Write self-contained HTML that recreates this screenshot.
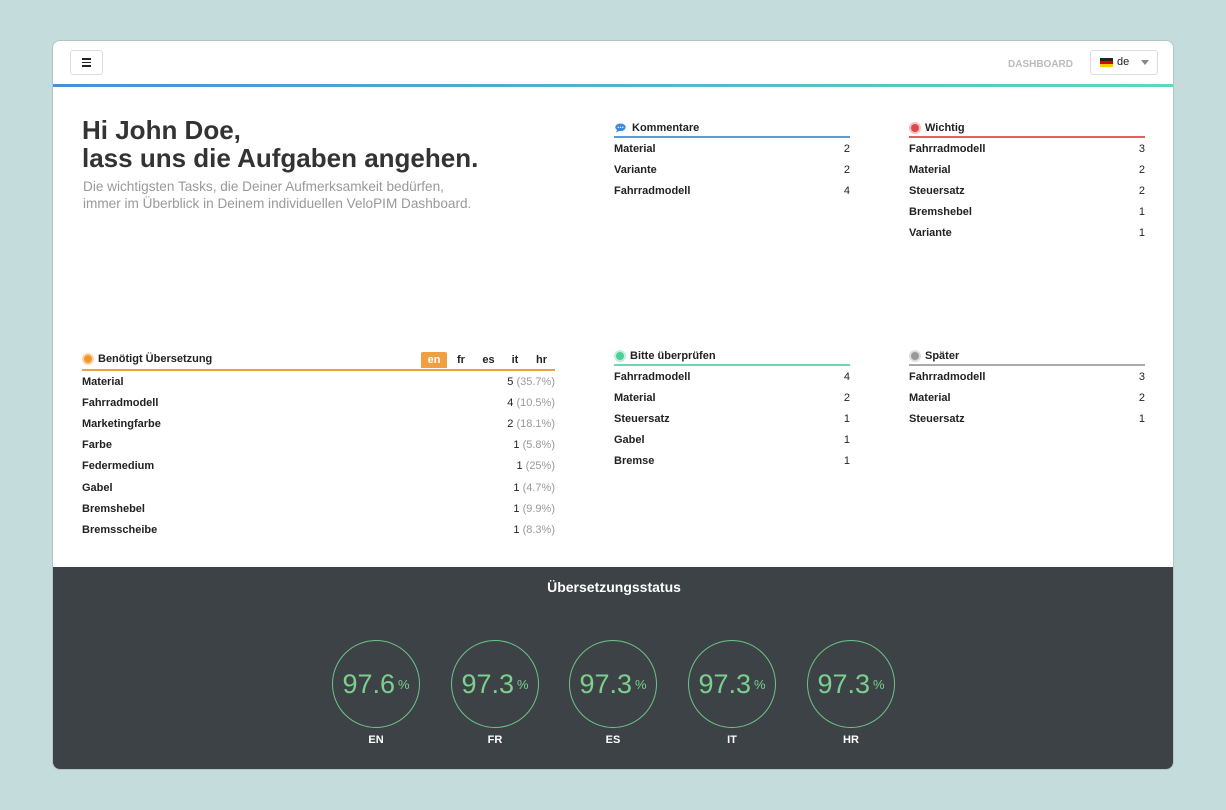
<!DOCTYPE html><html><head><style>
*{margin:0;padding:0;box-sizing:border-box}
body{width:1226px;height:810px;background:#c4dcdc;font-family:"Liberation Sans",sans-serif;position:relative;overflow:hidden}
.card{position:absolute;left:52px;top:40px;width:1122px;height:730px;background:#fff;border-radius:8px;overflow:hidden;border:1px solid #b8c4c4}
.a{position:absolute}
.list{position:absolute;width:236px;font-size:11px;color:#222}
.hd{font-weight:bold;height:19px;display:flex;align-items:center;gap:6px;padding-left:1px}
.row{display:flex;justify-content:space-between;height:21.2px;align-items:center;font-weight:bold}
.row span:last-child{font-weight:normal}
.g{color:#999}
.dot{width:8px;height:8px;border-radius:50%;display:inline-block;margin-left:1px}
.circ{position:absolute;width:88px;height:88px;border:1.3px solid #6dc487;border-radius:50%;color:#7ccf8e;font-size:27px;display:flex;align-items:center;justify-content:center}
.circ small{font-size:13px;margin-left:3px}
.lab{position:absolute;color:#fff;font-weight:bold;font-size:11px;width:88px;text-align:center}
</style></head><body>
<div class="card">
<div class="a" style="left:17px;top:9px;width:33px;height:25px;border:1px solid #ddd;border-radius:3px;display:flex;align-items:center;justify-content:center;flex-direction:column;gap:2px"><i style="width:9px;height:1.7px;background:#222;display:block"></i><i style="width:9px;height:1.7px;background:#222;display:block"></i><i style="width:9px;height:1.7px;background:#222;display:block"></i></div>
<div class="a" style="left:955px;top:18px;font-size:10px;font-weight:bold;color:#bbb">DASHBOARD</div>
<div class="a" style="left:1037px;top:9px;width:68px;height:25px;border:1px solid #ddd;border-radius:3px;font-size:11px;color:#222"><span class="a" style="left:9px;top:7px;width:13px;height:9px;background:linear-gradient(#222 33%,#d00 33%,#d00 66%,#fc0 66%)"></span><span class="a" style="left:26px;top:5px">de</span><span class="a" style="left:50px;top:9px;border:4px solid transparent;border-top:5px solid #888"></span></div>
<div class="a" style="left:0;top:43px;width:1122px;height:3px;background:linear-gradient(90deg,#4a8fd8,#5ad8c0)"></div>
<div class="a" style="left:29px;top:75px;font-size:26px;font-weight:bold;color:#333;line-height:28px">Hi John Doe,<br>lass uns die Aufgaben angehen.</div>
<div class="a" style="left:30px;top:137px;font-size:13.6px;color:#999;line-height:17px">Die wichtigsten Tasks, die Deiner Aufmerksamkeit bedürfen,<br>immer im Überblick in Deinem individuellen VeloPIM Dashboard.</div>

<div class="list" style="left:561px;top:78px"><div class="hd" style="border-bottom:2px solid #5b9bd5"><svg width="11" height="10" viewBox="0 0 11 10"><ellipse cx="5.5" cy="4.3" rx="5.2" ry="3.8" fill="#3f8ad8"/><path d="M2 7 L1 9.5 L4.5 7.8Z" fill="#3f8ad8"/><circle cx="3.2" cy="4.3" r=".7" fill="#fff"/><circle cx="5.5" cy="4.3" r=".7" fill="#fff"/><circle cx="7.8" cy="4.3" r=".7" fill="#fff"/></svg>Kommentare</div>
<div class="row"><span>Material</span><span>2</span></div><div class="row"><span>Variante</span><span>2</span></div><div class="row"><span>Fahrradmodell</span><span>4</span></div></div>

<div class="list" style="left:856px;top:78px"><div class="hd" style="border-bottom:2px solid #e06060"><span class="dot" style="background:#e04848;box-shadow:0 0 0 2px #f8c0c0"></span>Wichtig</div>
<div class="row"><span>Fahrradmodell</span><span>3</span></div><div class="row"><span>Material</span><span>2</span></div><div class="row"><span>Steuersatz</span><span>2</span></div><div class="row"><span>Bremshebel</span><span>1</span></div><div class="row"><span>Variante</span><span>1</span></div></div>

<div class="list" style="left:29px;top:307px;width:473px"><div class="hd" style="height:23px;border-bottom:2px solid #f0a040;position:relative"><span class="dot" style="background:#f0962e;box-shadow:0 0 0 2px #fbd5a8"></span>Benötigt Übersetzung
<div class="a" style="right:0;top:4px;display:flex;font-size:11px"><span style="background:#f0a040;color:#fff;width:26px;text-align:center;padding:2px 0;border-radius:2px 2px 0 0">en</span><span style="width:28px;text-align:center;padding:2px 0">fr</span><span style="width:27px;text-align:center;padding:2px 0">es</span><span style="width:26px;text-align:center;padding:2px 0">it</span><span style="width:27px;text-align:center;padding:2px 0">hr</span></div></div>
<div class="row"><span>Material</span><span>5 <i class="g" style="font-style:normal">(35.7%)</i></span></div>
<div class="row"><span>Fahrradmodell</span><span>4 <i class="g" style="font-style:normal">(10.5%)</i></span></div>
<div class="row"><span>Marketingfarbe</span><span>2 <i class="g" style="font-style:normal">(18.1%)</i></span></div>
<div class="row"><span>Farbe</span><span>1 <i class="g" style="font-style:normal">(5.8%)</i></span></div>
<div class="row"><span>Federmedium</span><span>1 <i class="g" style="font-style:normal">(25%)</i></span></div>
<div class="row"><span>Gabel</span><span>1 <i class="g" style="font-style:normal">(4.7%)</i></span></div>
<div class="row"><span>Bremshebel</span><span>1 <i class="g" style="font-style:normal">(9.9%)</i></span></div>
<div class="row"><span>Bremsscheibe</span><span>1 <i class="g" style="font-style:normal">(8.3%)</i></span></div></div>

<div class="list" style="left:561px;top:306px"><div class="hd" style="border-bottom:2px solid #6dd8b0"><span class="dot" style="background:#4ccf98;box-shadow:0 0 0 2px #c0f0dc"></span>Bitte überprüfen</div>
<div class="row"><span>Fahrradmodell</span><span>4</span></div><div class="row"><span>Material</span><span>2</span></div><div class="row"><span>Steuersatz</span><span>1</span></div><div class="row"><span>Gabel</span><span>1</span></div><div class="row"><span>Bremse</span><span>1</span></div></div>

<div class="list" style="left:856px;top:306px"><div class="hd" style="border-bottom:2px solid #aaa"><span class="dot" style="background:#999;box-shadow:0 0 0 2px #ddd"></span>Später</div>
<div class="row"><span>Fahrradmodell</span><span>3</span></div><div class="row"><span>Material</span><span>2</span></div><div class="row"><span>Steuersatz</span><span>1</span></div></div>

<div class="a" style="left:0;top:526px;width:1122px;height:204px;background:#3d4246">
<div class="a" style="left:0;top:12px;width:1122px;text-align:center;color:#fff;font-weight:bold;font-size:14px">Übersetzungsstatus</div>
<div class="circ" style="left:279px;top:73px">97.6<small>%</small></div><div class="lab" style="left:279px;top:167px">EN</div>
<div class="circ" style="left:398px;top:73px">97.3<small>%</small></div><div class="lab" style="left:398px;top:167px">FR</div>
<div class="circ" style="left:516px;top:73px">97.3<small>%</small></div><div class="lab" style="left:516px;top:167px">ES</div>
<div class="circ" style="left:635px;top:73px">97.3<small>%</small></div><div class="lab" style="left:635px;top:167px">IT</div>
<div class="circ" style="left:754px;top:73px">97.3<small>%</small></div><div class="lab" style="left:754px;top:167px">HR</div>
</div>
</div>
</body></html>
